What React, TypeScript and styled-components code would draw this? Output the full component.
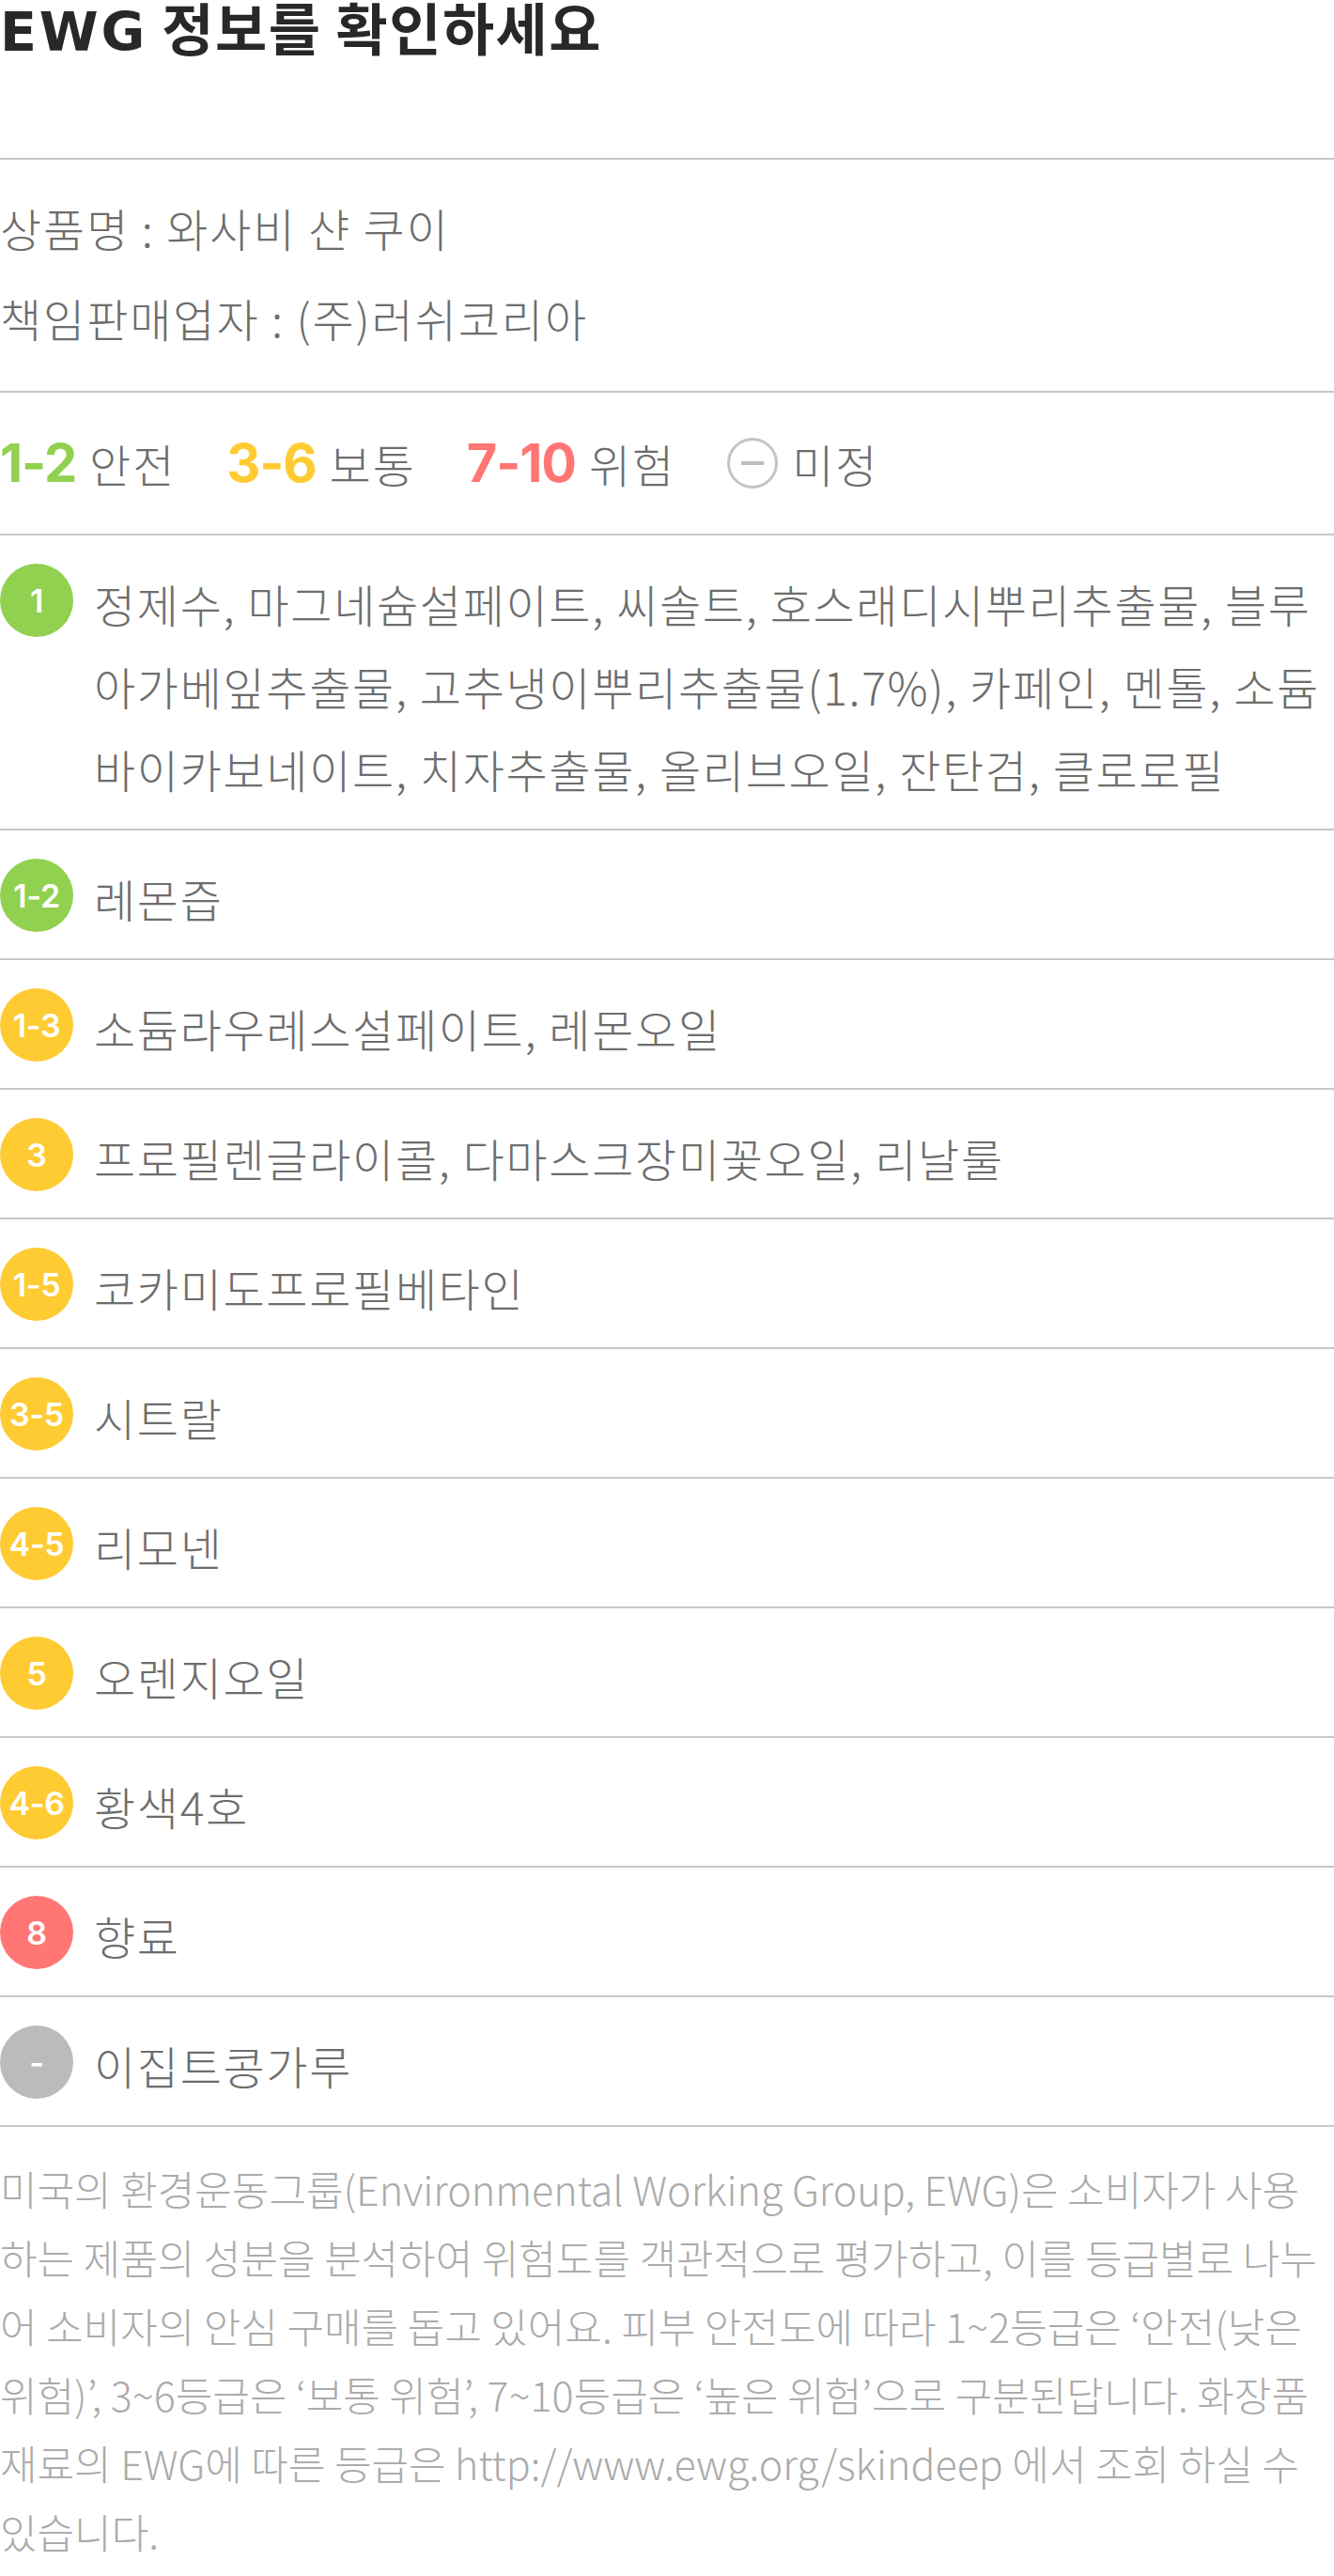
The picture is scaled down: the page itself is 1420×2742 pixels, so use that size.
import React from "react";
import styled, { createGlobalStyle } from "styled-components";

type Tone = "green" | "yellow" | "red" | "gray";

type Ingredient = {
  grade: string;
  tone: Tone;
  names: string;
};

const toneColors: Record<Tone, string> = {
  green: "#92d050",
  yellow: "#ffcb33",
  red: "#ff7674",
  gray: "#bbbbbb",
};

const ingredients: Ingredient[] = [
  {
    grade: "1",
    tone: "green",
    names:
      "정제수, 마그네슘설페이트, 씨솔트, 호스래디시뿌리추출물, 블루아가베잎추출물, 고추냉이뿌리추출물(1.7%), 카페인, 멘톨, 소듐바이카보네이트, 치자추출물, 올리브오일, 잔탄검, 클로로필",
  },
  { grade: "1-2", tone: "green", names: "레몬즙" },
  { grade: "1-3", tone: "yellow", names: "소듐라우레스설페이트, 레몬오일" },
  { grade: "3", tone: "yellow", names: "프로필렌글라이콜, 다마스크장미꽃오일, 리날룰" },
  { grade: "1-5", tone: "yellow", names: "코카미도프로필베타인" },
  { grade: "3-5", tone: "yellow", names: "시트랄" },
  { grade: "4-5", tone: "yellow", names: "리모넨" },
  { grade: "5", tone: "yellow", names: "오렌지오일" },
  { grade: "4-6", tone: "yellow", names: "황색4호" },
  { grade: "8", tone: "red", names: "향료" },
  { grade: "-", tone: "gray", names: "이집트콩가루" },
];

const GlobalStyle = createGlobalStyle`
  html, body {
    margin: 0;
    padding: 0;
    background: #ffffff;
  }
  body {
    font-family: "Noto Sans CJK KR", "Noto Sans", sans-serif;
    color: #6d6d6d;
  }
`;

const App: React.FC = () => {
  return (
    <>
      <GlobalStyle />
      <Page>
        <Header>
          <Title>
            <Latin>EWG</Latin> 정보를 확인하세요
          </Title>
        </Header>

        <InfoSection>
          <InfoLine>상품명 : 와사비 샨 쿠이</InfoLine>
          <InfoLine>책임판매업자 : (주)러쉬코리아</InfoLine>
        </InfoSection>

        <Legend>
          <LegendItem>
            <LegendRange tone="green">1-2</LegendRange>
            <LegendLabel>안전</LegendLabel>
          </LegendItem>
          <LegendItem>
            <LegendRange tone="yellow">3-6</LegendRange>
            <LegendLabel>보통</LegendLabel>
          </LegendItem>
          <LegendItem>
            <LegendRange tone="red">7-10</LegendRange>
            <LegendLabel>위험</LegendLabel>
          </LegendItem>
          <LegendItem>
            <UnknownIcon width="56" height="56" viewBox="0 0 56 56">
              <circle cx="28" cy="28" r="25.5" fill="none" stroke="#c4c4c4" strokeWidth="3" />
              <line x1="16" y1="28" x2="40" y2="28" stroke="#bdbdbd" strokeWidth="4" />
            </UnknownIcon>
            <LegendLabel>미정</LegendLabel>
          </LegendItem>
        </Legend>

        <List>
          {ingredients.map((item) => (
            <Row key={item.grade}>
              <Badge tone={item.tone}>{item.grade}</Badge>
              <Names>{item.names}</Names>
            </Row>
          ))}
        </List>

        <Footer>
          <FooterText>
            미국의 환경운동그룹(Environmental Working Group, EWG)은 소비자가 사용하는 제품의 성분을
            분석하여 위험도를 객관적으로 평가하고, 이를 등급별로 나누어 소비자의 안심 구매를 돕고
            있어요. 피부 안전도에 따라 1~2등급은 ‘안전(낮은 위험)’, 3~6등급은 ‘보통 위험’,
            7~10등급은 ‘높은 위험’으로 구분된답니다. 화장품 재료의 EWG에 따른 등급은
            http://www.ewg.org/skindeep 에서 조회 하실 수 있습니다.
          </FooterText>
        </Footer>
      </Page>
    </>
  );
};

const Page = styled.div`
  width: 1420px;
  min-height: 2742px;
  background: #ffffff;
`;

const Section = styled.section`
  border-bottom: 2px solid #c8c8c8;
`;

const Header = styled(Section)`
  height: 170px;
  box-sizing: border-box;
`;

const Title = styled.h1`
  margin: 0;
  font-size: 60px;
  line-height: 56px;
  font-weight: 700;
  letter-spacing: 0.025em;
  color: #282828;
`;

const Latin = styled.span`
  font-family: "DejaVu Sans", Inter, sans-serif;
  font-size: 57px;
  letter-spacing: 0.05em;
`;

const InfoSection = styled(Section)`
  padding: 24px 0 30px;
`;

const InfoLine = styled.p`
  margin: 0;
  font-size: 48px;
  line-height: 96px;
  font-weight: 300;
  letter-spacing: 0.04em;
  color: #6d6d6d;
`;

const Legend = styled(Section)`
  height: 150px;
  display: flex;
  align-items: center;
  gap: 54px;
`;

const LegendItem = styled.div`
  display: flex;
  align-items: center;
  gap: 14px;
`;

const LegendRange = styled.span<{ tone: Tone }>`
  font-family: Inter, "Noto Sans", sans-serif;
  font-size: 56px;
  line-height: 60px;
  font-weight: 700;
  letter-spacing: -0.02em;
  color: ${({ tone }) => toneColors[tone]};
`;

const LegendLabel = styled.span`
  font-size: 48px;
  line-height: 60px;
  font-weight: 300;
  letter-spacing: 0.04em;
  color: #6d6d6d;
`;

const UnknownIcon = styled.svg`
  display: block;
  width: 56px;
  height: 56px;
`;

const List = styled.div`
  display: flex;
  flex-direction: column;
`;

const Row = styled(Section)`
  display: flex;
  align-items: flex-start;
  gap: 22px;
  padding: 28px 0 20px;
`;

const Badge = styled.span<{ tone: Tone }>`
  flex: 0 0 78px;
  width: 78px;
  height: 78px;
  margin-top: 2px;
  border-radius: 50%;
  background: ${({ tone }) => toneColors[tone]};
  color: #ffffff;
  display: flex;
  align-items: center;
  justify-content: center;
  font-family: Inter, "Noto Sans", sans-serif;
  font-size: 34px;
  font-weight: 600;
  letter-spacing: -0.01em;
`;

const Names = styled.p`
  margin: 0;
  flex: 1;
  font-size: 48px;
  line-height: 88px;
  font-weight: 300;
  letter-spacing: 0.035em;
  color: #6d6d6d;
`;

const Footer = styled.footer`
  padding: 29px 0 16px;
  overflow: hidden;
`;

const FooterText = styled.p`
  margin: 0;
  font-size: 43px;
  line-height: 73px;
  font-weight: 300;
  letter-spacing: 0;
  color: #ababab;
`;

export default App;
